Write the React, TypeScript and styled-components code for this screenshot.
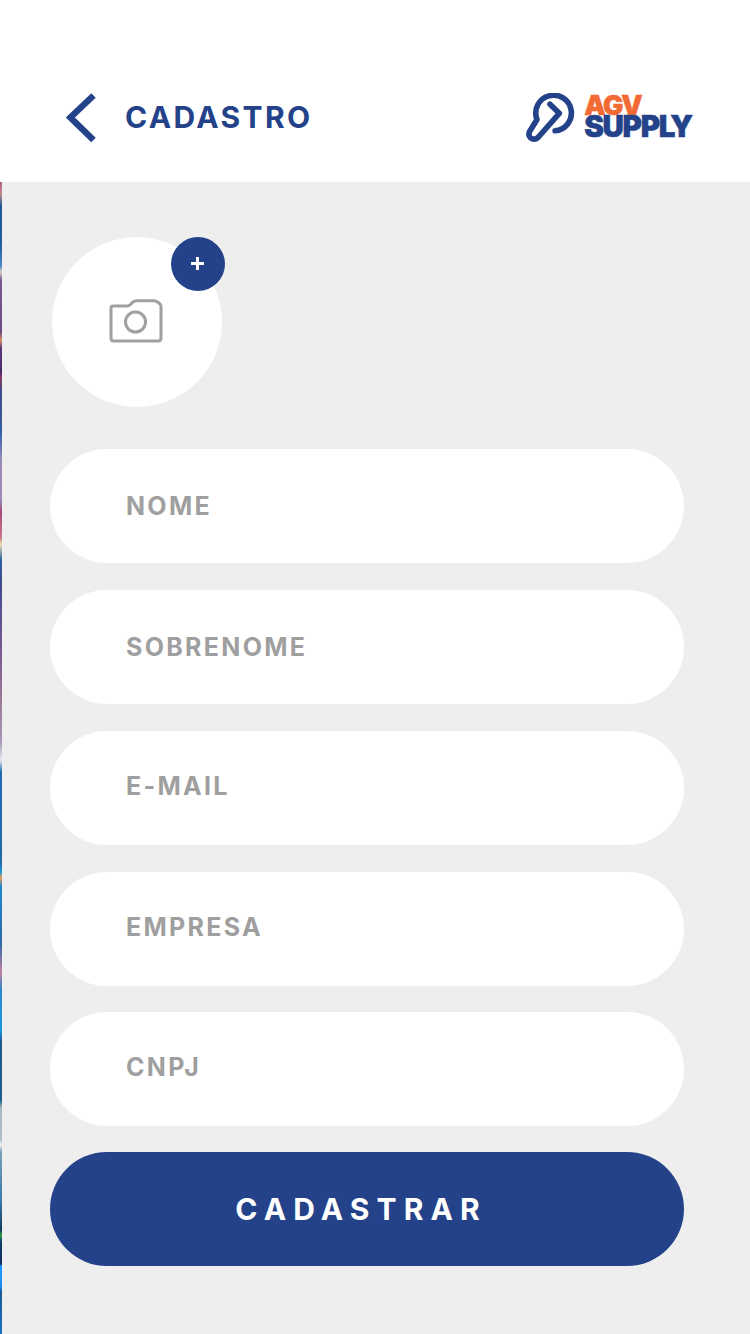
import React from "react";
import styled, { createGlobalStyle } from "styled-components";

const GlobalStyle = createGlobalStyle`
  html, body {
    margin: 0;
    padding: 0;
    background: #eeeeee;
  }
  * {
    box-sizing: border-box;
  }
`;

const BLUE = "#234289";
const FONT = `Inter, "Liberation Sans", sans-serif`;

// colours of the sliver on the left edge, [y from top of body, colour]
const STRIP_STOPS: Array<[number, string]> = [
  [0, "#b0607a"],
  [12, "#c08a90"],
  [24, "#1f5a94"],
  [62, "#1f5f9c"],
  [84, "#4a8ac0"],
  [90, "#d8d0c8"],
  [98, "#7a5a90"],
  [150, "#6a4a86"],
  [158, "#d89060"],
  [166, "#5a3a78"],
  [190, "#4a2a68"],
  [196, "#8a3a60"],
  [208, "#3f4a8a"],
  [240, "#3a5a98"],
  [250, "#2f62a8"],
  [278, "#9a8ab8"],
  [318, "#9a88b8"],
  [330, "#a84a78"],
  [356, "#c87a88"],
  [362, "#f0e0b0"],
  [378, "#2a62a0"],
  [400, "#3f4a90"],
  [470, "#7a5a90"],
  [520, "#9a7a98"],
  [560, "#a898b8"],
  [578, "#e8e8f0"],
  [590, "#1f6ab0"],
  [680, "#1a6aa8"],
  [690, "#1f9ae0"],
  [696, "#e8a050"],
  [704, "#2088d0"],
  [760, "#2a6aa8"],
  [790, "#c080a0"],
  [808, "#2f88d0"],
  [848, "#1a98e0"],
  [860, "#1a5a90"],
  [918, "#1f6090"],
  [926, "#a8b8c0"],
  [958, "#b0c0c8"],
  [963, "#f0f0f0"],
  [970, "#7aa0b8"],
  [1018, "#3a7aa8"],
  [1048, "#123a60"],
  [1053, "#30a040"],
  [1060, "#103a68"],
  [1082, "#0f3060"],
  [1084, "#1a98ff"],
  [1104, "#1a90f0"],
  [1110, "#1a5a98"],
  [1152, "#1a70c0"],
];

const Page = styled.div`
  width: 750px;
  height: 1334px;
  display: flex;
  flex-direction: column;
  overflow: hidden;
  font-family: ${FONT};
`;

const Header = styled.header`
  height: 182px;
  flex: none;
  background: #fff;
  display: flex;
  align-items: flex-start;
  justify-content: space-between;
  padding: 93px 58px 0 66px;
`;

const BackGroup = styled.div`
  display: flex;
  align-items: center;
  height: 49px;
`;

const BackIcon = styled.svg`
  width: 30px;
  height: 49px;
  display: block;
`;

const Title = styled.h1`
  margin: 0 0 0 29px;
  font-size: 30px;
  font-weight: 700;
  letter-spacing: 2.35px;
  line-height: 49px;
  color: ${BLUE};
`;

const Logo = styled.div`
  display: flex;
  gap: 8px;
`;

const LogoMark = styled.svg`
  width: 50px;
  height: 49px;
  display: block;
`;

const LogoWords = styled.div`
  display: flex;
  flex-direction: column;
  padding-top: 2px;
`;

const LogoWord = styled.span<{ $orange?: boolean }>`
  height: 21px;
  font-size: ${(p) => (p.$orange ? 27 : 29.5)}px;
  font-weight: 900;
  line-height: 21px;
  letter-spacing: ${(p) => (p.$orange ? -1.4 : -1.25)}px;
  color: ${(p) => (p.$orange ? "#f26b35" : BLUE)};
  -webkit-text-stroke: 0.5px currentColor;
`;

const Body = styled.main`
  flex: 1;
  display: flex;
`;

/* thin sliver of the picture behind the screen */
const Strip = styled.div`
  width: 2px;
  flex: none;
  background: linear-gradient(
    to bottom,
    ${STRIP_STOPS.map(([y, colour]) => `${colour} ${y}px`).join(", ")}
  );
`;

const Form = styled.form`
  flex: 1;
  padding: 55px 66px 0 48px;
  display: flex;
  flex-direction: column;
`;

const AvatarWrap = styled.div`
  position: relative;
  width: 170px;
  height: 170px;
  margin: 0 0 42px 2px;
`;

const Avatar = styled.div`
  width: 170px;
  height: 170px;
  border-radius: 50%;
  background: #fff;
  display: flex;
  align-items: center;
  justify-content: center;
`;

const CameraIcon = styled.svg`
  width: 54px;
  height: 44px;
  display: block;
  margin: -3px 2px 0 0;
`;

const AddBadge = styled.div`
  position: absolute;
  top: 0;
  left: 119px;
  width: 54px;
  height: 54px;
  border-radius: 50%;
  background: ${BLUE};
  display: flex;
  align-items: center;
  justify-content: center;

  &::before {
    content: "";
    width: 13px;
    height: 13px;
    margin: -2px 2px 0 0;
    background:
      linear-gradient(#fff, #fff) center / 13px 3px no-repeat,
      linear-gradient(#fff, #fff) center / 3px 13px no-repeat;
  }
`;

const Fields = styled.div`
  display: flex;
  flex-direction: column;
  gap: 27px;
`;

const Field = styled.div<{ $raised?: boolean }>`
  height: 114px;
  border-radius: 57px;
  background: #fff;
  display: flex;
  align-items: center;
  padding: 0 0 ${(p) => (p.$raised ? 4 : 0)}px 76px;

  &:nth-child(5) {
    margin-top: -1px;
  }
`;

const FieldLabel = styled.span`
  font-size: 25px;
  font-weight: 700;
  letter-spacing: 2.3px;
  color: #9f9f9f;
`;

const Submit = styled.button`
  height: 114px;
  margin-top: -1px;
  border: 0;
  padding: 0 12px 0 0;
  border-radius: 57px;
  background: ${BLUE};
  color: #fff;
  font-family: ${FONT};
  font-size: 30px;
  font-weight: 700;
  letter-spacing: 7.1px;
`;

const FIELDS = [
  { label: "NOME" },
  { label: "SOBRENOME" },
  { label: "E-MAIL", raised: true },
  { label: "EMPRESA", raised: true },
  { label: "CNPJ", raised: true },
];

export default function App() {
  return (
    <Page>
      <GlobalStyle />
      <Header>
        <BackGroup>
          <BackIcon viewBox="0 0 30 49" fill="none">
            <path d="M27.5 2.5 L4.4 24.5 L27.5 47" stroke={BLUE} strokeWidth="6.4" />
          </BackIcon>
          <Title>CADASTRO</Title>
        </BackGroup>
        <Logo>
          <LogoMark viewBox="0 0 50 49" fill="none">
            <path
              d="M29 37.8 A17.8 17.8 0 1 0 11 26.5 L3.6 38.5 Q1.8 42.5 4.6 45 Q8.5 47.5 12 44.5 L33.3 20.3 L24 11.3"
              stroke={BLUE}
              strokeWidth="5.6"
              strokeLinecap="round"
              strokeLinejoin="round"
            />
          </LogoMark>
          <LogoWords>
            <LogoWord $orange>AGV</LogoWord>
            <LogoWord>SUPPLY</LogoWord>
          </LogoWords>
        </Logo>
      </Header>
      <Body>
        <Strip />
        <Form>
          <AvatarWrap>
            <Avatar>
              <CameraIcon viewBox="0 0 54 44" fill="none" stroke="#a0a0a0" strokeWidth="3">
                <path
                  d="M4 7 H18 Q20 7 21.5 5.5 L24 3 Q25.5 1.8 27.5 1.8 H45 Q47 1.8 48.5 3 L51 5 Q52 6 52 8 V39 Q52 42 49 42 H5 Q2 42 2 39 V9 Q2 7 4 7 Z"
                  strokeLinejoin="round"
                />
                <circle cx="26.5" cy="23" r="10" />
              </CameraIcon>
            </Avatar>
            <AddBadge />
          </AvatarWrap>
          <Fields>
            {FIELDS.map(({ label, raised }) => (
              <Field key={label} $raised={raised}>
                <FieldLabel>{label}</FieldLabel>
              </Field>
            ))}
            <Submit type="button">CADASTRAR</Submit>
          </Fields>
        </Form>
      </Body>
    </Page>
  );
}
